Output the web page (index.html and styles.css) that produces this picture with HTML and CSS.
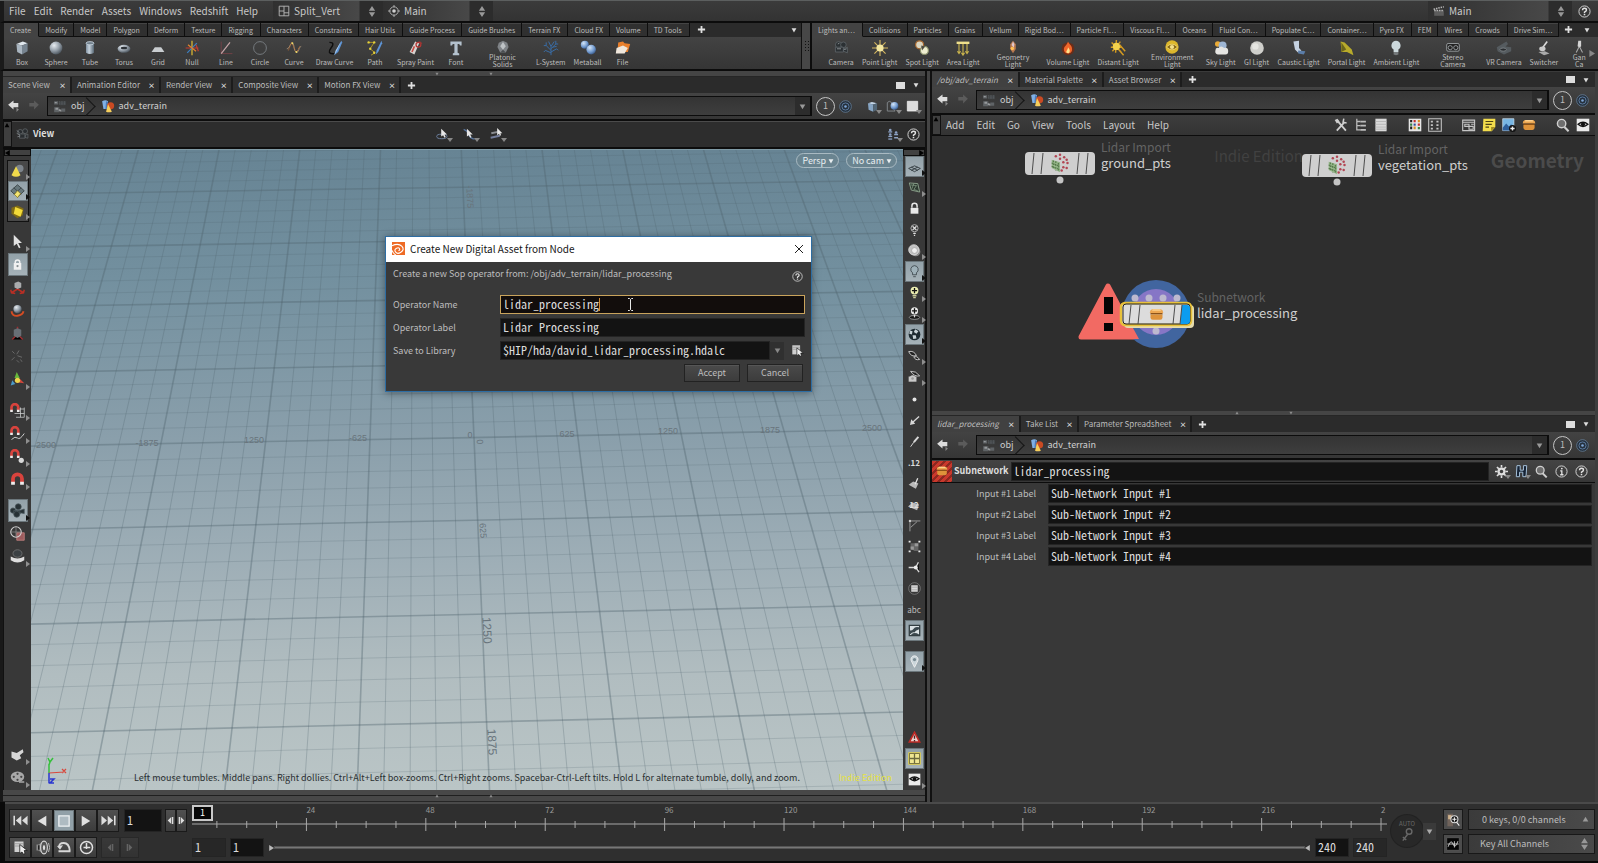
FILE: index.html
```html
<!DOCTYPE html>
<html lang="en">
<head>
<meta charset="utf-8">
<title>adv_terrain</title>
<link rel="stylesheet" href="styles.css">
</head>
<body>
<svg class="defs" aria-hidden="true">
  <defs>
    <radialGradient id="ball" cx=".35" cy=".3" r=".8"><stop offset="0" stop-color="#e8edf2"/><stop offset=".5" stop-color="#97a1ab"/><stop offset="1" stop-color="#3d464e"/></radialGradient>
    <radialGradient id="blueball" cx=".35" cy=".3" r=".8"><stop offset="0" stop-color="#d5e6f8"/><stop offset=".6" stop-color="#6e97cc"/><stop offset="1" stop-color="#2c4a78"/></radialGradient>
    <linearGradient id="tube"><stop offset="0" stop-color="#7f90a0"/><stop offset=".4" stop-color="#c6d2dc"/><stop offset="1" stop-color="#566673"/></linearGradient>
  </defs>
  <symbol id="box" viewBox="0 0 20 20"><path fill="#dfe6ec" d="M3 5l8-3 6 2-7 3z"/><path fill="#a9b5c0" d="M3 5l7 2v11l-6-3z"/><path fill="#76838f" d="M10 7l7-3v10l-7 4z"/></symbol>
  <symbol id="sphere" viewBox="0 0 20 20"><circle cx="10" cy="10" r="8" fill="url(#ball)"/></symbol>
  <symbol id="tubei" viewBox="0 0 20 20"><path fill="url(#tube)" d="M5 4v12q5 3 10 0V4z"/><ellipse cx="10" cy="4" rx="5" ry="2" fill="#71808c" stroke="#c6d2dc"/></symbol>
  <symbol id="torus" viewBox="0 0 20 20"><ellipse cx="10" cy="11" rx="8" ry="5" fill="url(#ball)"/><ellipse cx="10" cy="10" rx="4" ry="1.6" fill="#2c3136"/></symbol>
  <symbol id="gridi" viewBox="0 0 20 20"><path fill="#c9cdd0" d="M6 9h8l4 6H2z"/></symbol>
  <symbol id="null" viewBox="0 0 20 20"><path stroke="#d8b631" stroke-width="1.6" d="M10 1v18"/><path stroke="#c33a31" stroke-width="1.5" d="M2 10h16M15 6l3 8"/><path stroke="#3d7fc0" stroke-width="1.5" d="M4 16L16 4"/><path stroke="#e6842b" stroke-width="1.5" d="M5 6l10 8"/></symbol>
  <symbol id="line" viewBox="0 0 20 20"><path stroke="#7c4147" d="M4 2v15h14" fill="none"/><path stroke="#c7a5a8" stroke-width="1.5" d="M4 17L15 3"/></symbol>
  <symbol id="circle" viewBox="0 0 20 20"><circle cx="10" cy="10" r="8" fill="none" stroke="#767b80" stroke-width="1.2"/></symbol>
  <symbol id="curve" viewBox="0 0 20 20"><path fill="none" stroke="#b89e81" d="M1 11C5 11 5 3 8 4s1 10 5 11 2-6 6-7"/><path stroke="#c9702e" fill="none" stroke-dasharray="1.5 1" d="M3 13L7 3l6 13 4-8"/><g fill="#eadc6a"><circle cx="8" cy="4" r="1.2"/><circle cx="13" cy="15" r="1.2"/></g></symbol>
  <symbol id="draw" viewBox="0 0 20 20"><path fill="none" stroke="#0e0e0e" stroke-width="1.8" d="M3 3c6 0 5 3 2 7s-4 8 5 7"/><path fill="#5d94d6" d="M18 1l1 2-5 12-5 4 2-6z"/><path fill="#b7d3ef" d="M18 1L11 13l-2 6 3-5z"/></symbol>
  <symbol id="path" viewBox="0 0 20 20"><path fill="none" stroke="#b09722" stroke-width="1.2" d="M2 3h7l-5 8 6 5-5 3"/><g fill="#e5d13b"><circle cx="2" cy="3" r="1.5"/><circle cx="9" cy="3" r="1.5"/><circle cx="4" cy="11" r="1.5"/><circle cx="9" cy="16" r="1.5"/></g><path fill="#5d94d6" d="M18 1l1 3-5 11-3 3 1-5z"/></symbol>
  <symbol id="spray" viewBox="0 0 20 20"><path fill="#d7d3d0" d="M9 2l5 2-6 14-6-3z"/><path stroke="#c64a43" stroke-width="2" d="M8 8l-3 7"/><circle cx="13" cy="6" r="3" fill="none" stroke="#b53734" stroke-width="1.6"/><path fill="#9a3633" d="M14 1l4 3-3 2z"/></symbol>
  <symbol id="font" viewBox="0 0 20 20"><path fill="#b4c1cd" d="M3 2h14v5h-2l-1-2h-2v11l2 1v2H6v-2l2-1V5H6L5 7H3z"/></symbol>
  <symbol id="platonic" viewBox="0 0 20 20"><path fill="#7f8387" d="M10 1l6 3 2 6-4 8H6l-4-8 2-6z"/><path fill="#bec2c5" d="M10 3l4 6-4 5-4-5z"/><path fill="#4a4e51" d="M6 18l4-4 4 4z"/></symbol>
  <symbol id="lsys" viewBox="0 0 20 20"><path fill="none" stroke="#3a6ea8" stroke-width="1.2" d="M10 19V8M10 13L4 7M10 11l6-6M10 8L7 2M10 8l4-6M4 7V3M4 7H1M16 5V1M16 5h3M10 15l7-4M10 16l-7-3M17 11l2 2M3 13l-2 2M12 9l5-1"/></symbol>
  <symbol id="meta" viewBox="0 0 20 20"><circle cx="6" cy="6" r="5" fill="url(#blueball)"/><circle cx="14" cy="12" r="6" fill="url(#blueball)"/></symbol>
  <symbol id="file" viewBox="0 0 20 20"><path fill="#e87f2c" d="M4 3l6-1 2 2 7 1-3 10H3z"/><path fill="#efe7dc" d="M2 10l8-3 6 3-4 7H1z"/></symbol>
  <symbol id="cam" viewBox="0 0 20 20"><g fill="#2b3033" stroke="#5f666a"><circle cx="7" cy="6" r="4"/><circle cx="13" cy="6" r="3.5"/><path d="M3 9h10v6H3zM13 11l5-2v7l-5-2z"/></g><path stroke="#9ca2a5" d="M5 11h5M14 12l3-1M6 5l2-1"/></symbol>
  <symbol id="sun" viewBox="0 0 20 20"><path stroke="#d6b85f" stroke-width="1.4" d="M10 0v20M0 10h20M3 3l14 14M17 3L3 17"/><circle cx="10" cy="10" r="4.5" fill="#f3e7a0"/></symbol>
  <symbol id="spot" viewBox="0 0 20 20"><circle cx="7" cy="6" r="5" fill="#d9d4c0" stroke="#a5652b" stroke-width="1.5"/><circle cx="13" cy="13" r="5" fill="#efeed0" stroke="#89906a" stroke-width="1.5"/><path fill="#4d4b40" d="M9 7l5 1-4 5z"/></symbol>
  <symbol id="area" viewBox="0 0 20 20"><path fill="#eedf8c" d="M2 2h16v3H2z"/><path stroke="#c9b34d" stroke-width="1.4" fill="none" d="M5 5v11M10 5v13M15 5v11M3 14l2 3 2-3M8 16l2 3 2-3M13 14l2 3 2-3"/></symbol>
  <symbol id="geol" viewBox="0 0 20 20"><path fill="#b9794f" d="M10 1l4 5v7l-4 6-4-6V6z"/><path fill="#dfc7cf" d="M10 2l2 4-1 5-3-4z"/><circle cx="9" cy="12" r="2.5" fill="#ffbf54"/></symbol>
  <symbol id="fire" viewBox="0 0 20 20"><circle cx="10" cy="11" r="8" fill="#6b2d18"/><path fill="#f0662a" d="M10 2c2 4 6 6 5 11s-9 5-10 0 4-6 5-11z"/><path fill="#ffe28b" d="M10 9c1 2 3 3 2 6s-5 1-4-1 2-3 2-5z"/></symbol>
  <symbol id="distant" viewBox="0 0 20 20"><path stroke="#d59c20" stroke-width="1.8" d="M2 3l12 12M8 0l-1 16M1 9h14M12 6l7 8M10 11l7 8M3 14L13 2"/><circle cx="8" cy="8" r="4.5" fill="#f5d24c"/></symbol>
  <symbol id="env" viewBox="0 0 20 20"><circle cx="10" cy="10" r="9.500" fill="#dcb72c"/><path d="M2 10q8-8 16 0-8 8-16 0z" fill="#8b6b15" stroke="#f8e58a"/><circle cx="10" cy="10" r="3" fill="#f4e28c"/></symbol>
  <symbol id="sky" viewBox="0 0 20 20"><circle cx="6" cy="5" r="3.5" fill="#ebab36"/><circle cx="12" cy="7" r="5" fill="#9eb6d4"/><path fill="#e5e5e2" d="M3 13q0-4 4-3 3-4 7 0 5-1 5 4t-5 4H6q-4-1-3-5z"/></symbol>
  <symbol id="gi" viewBox="0 0 20 20"><circle cx="10" cy="10" r="8.500" fill="#cfcfcb"/><circle cx="8" cy="8" r="4" fill="#e5e5e1"/></symbol>
  <symbol id="caustic" viewBox="0 0 20 20"><path fill="#c5d2e2" d="M3 2l7-1v9l3 3-4 3-4-4z"/><path fill="#5b7da8" d="M9 13l9 1-2 4-7-1z"/></symbol>
  <symbol id="portal" viewBox="0 0 20 20"><path fill="#b8ab2b" d="M2 2l5 1 9 9 2 7-8-4H3z"/><path fill="#6a651c" d="M3 3l6 9-6 3z"/></symbol>
  <symbol id="bulb" viewBox="0 0 20 20"><path fill="#ccd8dc" d="M10 1a6 6 0 0 1 3 11v3H7v-3a6 6 0 0 1 3-11z"/><path fill="#75797b" d="M7 15h6v3l-3 1-3-1z"/></symbol>
  <symbol id="stereo" viewBox="0 0 20 20"><g fill="#222" stroke="#a5a9ab" stroke-width="1.2"><rect x="1" y="5" width="18" height="11" rx="2"/><circle cx="6" cy="11" r="3"/><circle cx="14" cy="11" r="3"/></g></symbol>
  <symbol id="vr" viewBox="0 0 20 20"><path fill="#555b5f" d="M1 9l12-7 2 3-3 3 7 1v5l-9 4-8-4z"/><ellipse cx="9" cy="12" rx="4" ry="2" fill="#2a2d30" stroke="#83898c"/></symbol>
  <symbol id="switcher" viewBox="0 0 20 20"><path fill="none" stroke="#d9d9d9" stroke-width="2" d="M14 2L8 10"/><ellipse cx="8" cy="11" rx="4" ry="3" fill="#c9c9c9"/><path fill="#aaa" d="M3 15l8-1 6 3-7 2z"/></symbol>
  <symbol id="gan" viewBox="0 0 20 20"><path fill="#d4d4d4" d="M9 1h4v8l-2 2-3-2z"/><path stroke="#aaa" stroke-width="1.5" d="M10 10l-4 8M11 10l4 8"/></symbol>

  <symbol id="back" viewBox="0 0 20 20"><path fill="currentColor" d="M1 8l9-7v4h8v7h-8v4z"/><path fill="#888" d="M15 13l4 3-4 4z"/></symbol>
  <symbol id="fwd" viewBox="0 0 20 20"><path fill="#5b5b5b" d="M19 8l-8-7v4H3v6h8v5z"/></symbol>
  <symbol id="obj" viewBox="0 0 20 20"><g fill="#5f6366"><path d="M1 2h6v5H1zM1 11h8v8H1zM12 13h6v5h-6z"/><path d="M9 2h10v6H9z" fill="#43474a"/></g><path fill="#96999b" d="M3 12h4v3H3zM8 14l4 1v3l-4-1zM2 3h3v2H2z"/><path stroke="#6a6e71" d="M8 3h10M8 6h10" stroke-dasharray="2 2"/></symbol>
  <symbol id="geo" viewBox="0 0 20 20"><path fill="#7fb0e6" d="M1 2q5-3 9 0v12H3z"/><path fill="#4d7ab5" d="M7 2l3 1v11H6z"/><circle cx="14" cy="9" r="5.5" fill="#c94a23"/><path fill="#f6ce5c" d="M10 6l6 12q-5 2-9 0z"/></symbol>
  <symbol id="target" viewBox="0 0 20 20"><circle cx="10" cy="10" r="9" fill="#25303c" stroke="#6f8cab"/><circle cx="10" cy="10" r="5.5" fill="none" stroke="#6a8fbb" stroke-width="1.2"/><circle cx="10" cy="10" r="2" fill="#7da5d6"/></symbol>
  <symbol id="help" viewBox="0 0 20 20"><circle cx="10" cy="10" r="8.6" fill="none" stroke="#d5d5d5" stroke-width="1.5"/><path fill="none" stroke="#e3e3e3" stroke-width="2.2" d="M7 8q0-3 3-3t3 2.500q0 1.500-3 3.500v1.500"/><path fill="#e3e3e3" d="M8.800 13.800h2.400v2H8.800z"/></symbol>
  <symbol id="info" viewBox="0 0 20 20"><circle cx="10" cy="10" r="8.600" fill="none" stroke="#d5d5d5" stroke-width="1.500"/><path stroke="#e3e3e3" stroke-width="2" fill="none" d="M8 9h2.500v6M8 15h5"/><circle cx="10.500" cy="5.500" r="1.400" fill="#e3e3e3"/></symbol>
  <symbol id="updown" viewBox="0 0 10 14"><path fill="#989898" d="M5 0l4 6H1zM5 14l4-6H1z"/></symbol>
  <symbol id="down" viewBox="0 0 10 10"><path fill="currentColor" d="M1 2h8L5 9z"/></symbol>
  <symbol id="up" viewBox="0 0 10 10"><path fill="currentColor" d="M1 8h8L5 1z"/></symbol>
  <symbol id="right" viewBox="0 0 10 10"><path fill="currentColor" d="M2 0v10l8-5z"/></symbol>
  <symbol id="left" viewBox="0 0 10 10"><path fill="currentColor" d="M8 0v10L0 5z"/></symbol>
  <symbol id="plus" viewBox="0 0 10 10"><path fill="#e0e0e0" d="M4 1h2v3h3v2H6v3H4V6H1V4h3z"/></symbol>
  <symbol id="split" viewBox="0 0 20 20"><path fill="none" stroke="#b8b8b8" stroke-width="1.500" d="M2 2h16v16H2zM10 2v16M2 10h8M10 13h8"/></symbol>
  <symbol id="radial" viewBox="0 0 20 20"><circle cx="10" cy="10" r="7" fill="none" stroke="#b5b5b5" stroke-width="1.500"/><circle cx="10" cy="10" r="3" fill="#d0d0d0"/><path stroke="#b5b5b5" stroke-width="1.500" d="M10 0v4M10 16v4M0 10h4M16 10h4"/></symbol>
  <symbol id="clap" viewBox="0 0 20 20"><path fill="#5d5d5d" d="M2 9h16v9H2z"/><path stroke="#b7b7b7" stroke-width="2.500" stroke-dasharray="2.500 1.500" d="M1 7l17-4M2 9h16"/></symbol>
  <symbol id="camgray" viewBox="0 0 20 20"><g fill="#292d30" stroke="#666b6f"><circle cx="6" cy="7" r="3.500"/><circle cx="13" cy="6" r="3.500"/><path d="M5 10h8v6H5zM13 12l4-2v6l-4-1z"/></g><path stroke="#8f9498" d="M1 9l5 3M2 14l4-1M1 5l4 3"/></symbol>
  <symbol id="ptr1" viewBox="0 0 20 20"><ellipse cx="9" cy="13" rx="8" ry="3.500" fill="none" stroke="#6d7f9e" stroke-width="1.500"/><path fill="#e6e6e6" d="M8 1v12l3-2 2 4 2-1-2-4h4z"/></symbol>
  <symbol id="ptr2" viewBox="0 0 20 20"><path fill="none" stroke="#58749c" stroke-width="2" d="M1 2q6 2 8 8t9 7"/><path fill="#e6e6e6" d="M6 1v12l3-2 2 4 2-1-2-4h4z"/></symbol>
  <symbol id="ptr3" viewBox="0 0 20 20"><path stroke="#8a8d92" stroke-width="3" d="M2 8l10-2"/><path stroke="#747e9c" stroke-width="3" d="M1 15l14-3"/><path fill="#e6e6e6" d="M11 0v11l3-2 1 3 2-1-1-3h3z"/></symbol>
  <symbol id="layouti" viewBox="0 0 20 20"><g fill="#8ca1c4"><circle cx="5" cy="3" r="2"/><path d="M2 5h6v2H2z"/><circle cx="5" cy="10" r="2"/><path d="M2 12h6v2H2z"/><path d="M2 16h6v2H2z"/><circle cx="14" cy="7" r="2"/><path d="M11 9h6v2h-6zM11 14h6v2h-6z"/></g></symbol>
  <symbol id="prim" viewBox="0 0 20 20"><path fill="none" stroke="#80868a" stroke-width="1.500" d="M2 4l3-2 4 2v6l5 7H2z"/><circle cx="13" cy="9" r="6" fill="url(#blueball)"/></symbol>
  <symbol id="square" viewBox="0 0 20 20"><path fill="#dcdcdc" stroke="#fff" d="M2 2h16v15H2z"/></symbol>
  <symbol id="cube2" viewBox="0 0 20 20"><path fill="#c4d6e8" d="M3 5l6-2 8 2-6 2z"/><path fill="#86a5c4" d="M3 5l8 2v11l-7-3z"/><path fill="#536777" d="M11 7l6-2v10l-6 3z"/></symbol>

  <symbol id="cone" viewBox="0 0 20 20"><circle cx="13" cy="6" r="5" fill="#7d848b"/><path fill="#f0d94b" d="M8 3l6 12q-6 4-12 0z"/></symbol>
  <symbol id="diamond" viewBox="0 0 20 20"><path fill="#67777b" stroke="#30383b" d="M10 1l9 8-9 9-9-9z"/><path stroke="#333b3e" d="M5 5l10 9M15 5L5 14"/><path fill="#f5e573" stroke="#9b8a2b" d="M10 9l4 4-4 5-4-4z"/></symbol>
  <symbol id="gold" viewBox="0 0 20 20"><path fill="#806c15" d="M2 5l8-3 8 4-1 9-7 4-8-6z"/><path fill="#f2da39" d="M7 4l10 4-3 9-9-4z"/></symbol>
  <symbol id="arrow" viewBox="0 0 20 20"><path fill="#e1e1e1" d="M5 1v15l4-3 3 6 2-1-3-6h5z"/></symbol>
  <symbol id="lock" viewBox="0 0 20 20"><path fill="none" stroke="#e8e8e8" stroke-width="2.200" d="M6 9V6a4 4 0 0 1 8 0v3"/><path fill="#e8e8e8" d="M4 9h12v9H4z"/></symbol>
  <symbol id="padlock" viewBox="0 0 20 20"><path fill="none" stroke="#f1f1f1" stroke-width="2" d="M7 9V7a3 3 0 0 1 6 0v2"/><path fill="#f1f1f1" d="M5 8h10v9H5z"/><circle cx="10" cy="12" r="1.500" fill="#868d90"/></symbol>
  <symbol id="move" viewBox="0 0 20 20"><path stroke="#b92f25" stroke-width="2" d="M2 17l8-5 8 5M1 13l1 4 5 1M19 13l-1 4-5 1" fill="none"/><path fill="#a9abad" d="M6 4l5-2 4 2v6l-5 2-4-2z"/></symbol>
  <symbol id="rot" viewBox="0 0 20 20"><path fill="none" stroke="#d44c23" stroke-width="2.500" d="M2 11q1 7 8 6t8-6"/><circle cx="10" cy="8" r="5.500" fill="url(#ball)"/></symbol>
  <symbol id="scale" viewBox="0 0 20 20"><path stroke="#9d2e31" stroke-width="2" d="M3 18l7-7 7 7M10 10V1"/><path fill="#686f76" d="M5 5l5-2 5 2v8l-5 3-5-3z"/></symbol>
  <symbol id="dots" viewBox="0 0 20 20"><path stroke="#6b6b6b" stroke-width="1.300" fill="none" d="M3 3l3 3M12 2l-3 5M6 11l-4 4M10 9l6 2M9 15l3 3M14 14l2 3"/></symbol>
  <symbol id="axes" viewBox="0 0 20 20"><path fill="#67b83b" d="M9 0l4 8H6z"/><path fill="#d2463b" d="M19 15l-8-1 2-5z"/><path fill="#4b9ac8" d="M1 18l2-7 4 5z"/><circle cx="10" cy="11" r="3.500" fill="#eed44e"/></symbol>
  <symbol id="mag" viewBox="0 0 20 20"><path fill="none" stroke="#d8433d" stroke-width="5" d="M4 14V9a6 6 0 0 1 12 0v5"/><path stroke="#ececec" stroke-width="5" d="M4 13v4M16 13v4"/></symbol>
  <symbol id="maggrid" viewBox="0 0 20 20"><path fill="none" stroke="#cfd2d2" d="M9 8h10M6 14h13M8 19h11M14 6v13M19 6v13"/><path fill="none" stroke="#d8433d" stroke-width="3.500" d="M2 10V6a4.500 4.500 0 0 1 9 0v4"/><path stroke="#ececec" stroke-width="3.500" d="M2 9v3M11 9v3"/></symbol>
  <symbol id="magcurve" viewBox="0 0 20 20"><path fill="none" stroke="#d0d0d0" stroke-width="1.300" d="M2 18q5-5 8-2t9-6"/><path fill="none" stroke="#d8433d" stroke-width="3.500" d="M2 10V6a4.500 4.500 0 0 1 9 0v4"/><path stroke="#ececec" stroke-width="3.500" d="M2 9v3M11 9v3"/></symbol>
  <symbol id="magpt" viewBox="0 0 20 20"><circle cx="15" cy="15" r="3.500" fill="#d8d8d8"/><path fill="none" stroke="#d8433d" stroke-width="3.500" d="M2 10V6a4.500 4.500 0 0 1 9 0v4"/><path stroke="#ececec" stroke-width="3.500" d="M2 9v3M11 9v3"/></symbol>
  <symbol id="camdark" viewBox="0 0 20 20"><g fill="#273135" stroke="#4b585e"><circle cx="4" cy="10" r="3.500"/><circle cx="11" cy="5" r="4"/><path d="M5 10h9v4H5z"/><circle cx="9" cy="15" r="4"/><path d="M13 10l6-2v6l-6-1z"/></g></symbol>
  <symbol id="overlap" viewBox="0 0 20 20"><path fill="#9d5c5e" stroke="#c98584" d="M9 9h10v10H9z"/><circle cx="8" cy="8" r="7" fill="none" stroke="#d2d2d2" stroke-width="1.500"/><path stroke="#888" d="M8 1v14M1 8h14"/></symbol>
  <symbol id="disc" viewBox="0 0 20 20"><path fill="#dedede" d="M1 10q9 5 18 0v5q-9 6-18 0z"/><ellipse cx="10" cy="6" rx="6" ry="5" fill="#3b4043" stroke="#777"/></symbol>
  <symbol id="hand" viewBox="0 0 20 20"><path fill="#d5d5d5" d="M2 6l7 2 8-5 1 4-5 4 2 4-6 3-7-4z"/></symbol>
  <symbol id="reel" viewBox="0 0 20 20"><ellipse cx="10" cy="9" rx="9" ry="7" fill="#a8a8a8"/><g fill="#454545"><circle cx="10" cy="5" r="1.500"/><circle cx="5" cy="9" r="1.500"/><circle cx="15" cy="9" r="1.500"/><circle cx="10" cy="13" r="1.500"/></g><path stroke="#a8a8a8" stroke-width="2" d="M12 16h7"/></symbol>

  <symbol id="plane" viewBox="0 0 20 20"><path fill="none" stroke="#232c30" stroke-width="1.200" d="M1 13l9-4 9 4-9 5zM5 11l10 5M15 11L5 16"/></symbol>
  <symbol id="mesh" viewBox="0 0 20 20"><path fill="#2d3a31" stroke="#93ab93" stroke-width="1.300" d="M2 3l13 1 3 13-13-3z"/><path stroke="#93ab93" fill="none" d="M4 6l9 1-4 6 6 2M9 4l-3 8"/></symbol>
  <symbol id="bulbx" viewBox="0 0 20 20"><circle cx="10" cy="8" r="5.500" fill="#333" stroke="#b6b6b6" stroke-width="1.400"/><path stroke="#ddd" stroke-width="2" d="M7 5l6 6M13 5l-6 6M8 16h4M9 19h2"/></symbol>
  <symbol id="shiny" viewBox="0 0 20 20"><circle cx="12" cy="12" r="7" fill="#8c8c8c"/><circle cx="9" cy="9" r="8" fill="#c3c3c3" stroke="#eee"/><circle cx="10" cy="10" r="4.500" fill="#efefef" stroke="#999"/></symbol>
  <symbol id="bulbo" viewBox="0 0 20 20"><path fill="#9fb1b9" stroke="#333d42" stroke-width="1.200" d="M10 1a6 6 0 0 1 3 11v3H7v-3a6 6 0 0 1 3-11zM8 18h4"/></symbol>
  <symbol id="bulbp" viewBox="0 0 20 20"><circle cx="10" cy="7" r="6" fill="#eef0b2"/><path stroke="#111" stroke-width="2" d="M10 3v8M6 7h8"/><path stroke="#c9cb9b" stroke-width="2" d="M7 15h6M8 18h4"/></symbol>
  <symbol id="bulbq" viewBox="0 0 20 20"><ellipse cx="10" cy="16" rx="8" ry="3" fill="#111" stroke="#d0d0d0"/><circle cx="10" cy="6" r="5.500" fill="#ececec"/><path stroke="#111" stroke-width="2" d="M10 2v8M6 6h8"/><path stroke="#ddd" stroke-width="2" d="M10 12v4"/></symbol>
  <symbol id="checker" viewBox="0 0 20 20"><circle cx="10" cy="10" r="9" fill="#1d2b31"/><path fill="#c7d3d7" d="M3 4l4 1-1 5-4-1zM11 2l5 3-3 4-4-3zM7 11h5l1 5-5 1z"/></symbol>
  <symbol id="eyes" viewBox="0 0 20 20"><path fill="#222" stroke="#c4c4c4" stroke-width="1.500" d="M1 4q8-2 12 6-8 3-12-6zM9 12q5-2 9 4-7 2-9-4z"/></symbol>
  <symbol id="eyecam" viewBox="0 0 20 20"><path fill="#222" stroke="#c4c4c4" stroke-width="1.500" d="M4 2q8-1 14 7-8 2-14-7z"/><path fill="#c9c9c9" d="M1 10h12v8H1z"/><circle cx="7" cy="12" r="4" fill="#c9c9c9"/><circle cx="7" cy="13" r="2" fill="#999"/></symbol>
  <symbol id="pt" viewBox="0 0 20 20"><circle cx="10" cy="10" r="3" fill="#e6e6e6"/></symbol>
  <symbol id="ptn" viewBox="0 0 20 20"><path fill="none" stroke="#d8d8d8" stroke-width="2" d="M17 4L6 14"/><path fill="#d8d8d8" d="M3 17l2-9 6 7z"/></symbol>
  <symbol id="pen" viewBox="0 0 20 20"><path stroke="#d8d8d8" stroke-width="3" d="M16 3L9 11"/><path stroke="#d8d8d8" stroke-width="1.500" d="M9 11l-5 7"/></symbol>
  <symbol id="primn" viewBox="0 0 20 20"><path fill="#b9b9b9" d="M1 12l7-5 8 3-4 8z"/><path stroke="#e5e5e5" stroke-width="2" d="M15 2l-4 9"/></symbol>
  <symbol id="wedge" viewBox="0 0 20 20"><path fill="#b9b9b9" d="M0 13l7-6 10 3-3 9z"/></symbol>
  <symbol id="angle" viewBox="0 0 20 20"><path fill="none" stroke="#999" stroke-width="1.500" d="M3 19V3h16M4 13L14 4"/><circle cx="3" cy="3" r="1.800" fill="#ccc"/></symbol>
  <symbol id="hull" viewBox="0 0 20 20"><path fill="#666" d="M4 5h6v5h6v7h-6l-6-4z"/><path fill="#999" d="M10 5h6v5h-6zM4 10h5v5H4z"/><g fill="#ececec"><path d="M1 1h3v3H1zM16 1h3v3h-3zM1 16h3v3H1zM16 16h3v3h-3z"/></g></symbol>
  <symbol id="tri" viewBox="0 0 20 20"><path stroke="#dadada" stroke-width="2" d="M16 2l-4 8 5 7M12 10H1"/><circle cx="12" cy="10" r="3" fill="#eee"/></symbol>
  <symbol id="list" viewBox="0 0 20 20"><circle cx="10" cy="10" r="9" fill="none" stroke="#8c8c8c"/><path fill="#dadada" d="M5 5h10v10H5z"/><path stroke="#999" d="M5 8h10M5 12h10"/></symbol>
  <symbol id="picture" viewBox="0 0 20 20"><path fill="#dae1e4" stroke="#323d41" stroke-width="2" d="M2 2h16v16H2z"/><path fill="#3a474d" d="M3 10q4 0 5-2 3-5 9-3v3q-6 2-7 5-3-1-7 3zM5 16q5-4 12 0v1H5z"/></symbol>
  <symbol id="pin" viewBox="0 0 20 20"><path fill="#cad5da" stroke="#f3f3f3" stroke-width="1.300" d="M10 19L5 9a5.500 5.500 0 1 1 10 0z"/><circle cx="10" cy="7" r="2.500" fill="#788a92"/></symbol>
  <symbol id="warn" viewBox="0 0 20 20"><path fill="#ead2ce" stroke="#bd2a25" stroke-width="2.500" d="M10 2l8 15H2z"/><path stroke="#4c2020" stroke-width="2" d="M10 7v5M10 14v2"/></symbol>
  <symbol id="four" viewBox="0 0 20 20"><path fill="#6b683d" stroke="#e0d257" stroke-width="1.500" d="M1 1h18v18H1z"/><path fill="#f0e792" d="M3 3h6v6H3zM11 3h6v6h-6zM3 11h6v6H3zM11 11h6v6h-6z"/></symbol>
  <symbol id="eye" viewBox="0 0 20 20"><path fill="#eaeaea" d="M1 1h18v18H1z"/><path fill="none" stroke="#111" stroke-width="2" d="M3 9q7-6 14 0-7 6-14 0z"/><circle cx="10" cy="9" r="3" fill="#111"/></symbol>

  <symbol id="wrench" viewBox="0 0 20 20"><path stroke="#cfcfcf" stroke-width="2.600" fill="none" d="M5 4l12 14M15 6L4 18"/><path stroke="#cfcfcf" stroke-width="2.200" fill="none" d="M14 1l-1 5 5 1"/><path fill="#cfcfcf" d="M1 3l4-2 3 4-4 3z"/></symbol>
  <symbol id="tree" viewBox="0 0 20 20"><path fill="none" stroke="#bdbdbd" stroke-width="1.800" d="M4 1v17M4 5h5M4 11h5M4 17h5"/><path stroke="#bdbdbd" stroke-width="2.500" d="M9 5h8M9 11h8M9 17h8"/></symbol>
  <symbol id="rows" viewBox="0 0 20 20"><path fill="#d9d9d9" d="M2 1h16v18H2z"/><path stroke="#aaa" d="M2 5h16M2 9h16M2 13h16M2 16h16"/></symbol>
  <symbol id="palette" viewBox="0 0 20 20"><path fill="#e6e6e6" d="M1 1h18v18H1z"/><g fill="#222"><path d="M3 3h3v3H3zM3 12h3v4H3z"/></g><path fill="#c73030" d="M8 3h3v3H8zM14 8h3v3h-3z"/><path fill="#d58e22" d="M14 3h3v3h-3zM8 12h3v4H8z"/><path fill="#368143" d="M3 8h3v3H3zM14 13h3v3h-3z"/><path fill="#2d4d9b" d="M8 8h3v3H8z"/></symbol>
  <symbol id="tilegrid" viewBox="0 0 20 20"><path fill="none" stroke="#c4c4c4" stroke-width="1.500" d="M1 1h18v18H1z"/><path stroke="#c4c4c4" stroke-width="2.500" stroke-dasharray="3 2" d="M4 5h5M4 10h5M4 15h5M12 5h5M12 10h5M12 15h5"/></symbol>
  <symbol id="boxes" viewBox="0 0 20 20"><path fill="none" stroke="#c5c5c5" stroke-width="1.600" d="M1 18V3h17v15zM1 6h17M4 9h6v3H4zM10 12h6v4h-6zM13 9h4"/></symbol>
  <symbol id="note" viewBox="0 0 20 20"><path fill="#f2dc4c" d="M2 1h17v12l-5 6H1z"/><path stroke="#4c4315" stroke-width="1.700" d="M5 5h11M5 9h9M5 13h5"/><path fill="#a08b1e" d="M13 13h6l-6 6z"/></symbol>
  <symbol id="img" viewBox="0 0 20 20"><path fill="#78b6e3" stroke="#cbdfee" d="M1 1h16v17H1z"/><path fill="#2e5f9a" d="M1 14l5-6 4 4 3-3 4 5v4H1z"/><circle cx="15" cy="15" r="5" fill="#111"/><path stroke="#eee" stroke-width="2" d="M15 12v6M12 15h6"/></symbol>
  <symbol id="chest" viewBox="0 0 20 20"><path fill="#eda751" d="M4 3h12q3 1 3 5H1q0-4 3-5z"/><path fill="#fbd08d" d="M5 3h10l1 2H4z"/><path fill="#8c5217" d="M2 8h16v2H2z"/><path fill="#de933a" d="M2 10h16v4q0 3-3 3H5q-3 0-3-3z"/></symbol>
  <symbol id="search" viewBox="0 0 20 20"><circle cx="8" cy="8" r="6" fill="#6e6e6e" stroke="#d0d0d0" stroke-width="2"/><path stroke="#d0d0d0" stroke-width="3" d="M12 13l6 6"/></symbol>
  <symbol id="gear" viewBox="0 0 20 20"><circle cx="10" cy="10" r="4.500" fill="none" stroke="#ddd" stroke-width="3.500"/><path stroke="#ddd" stroke-width="2.500" d="M10 0v4M10 16v4M0 10h4M16 10h4M3 3l3 3M14 14l3 3M17 3l-3 3M6 14l-3 3"/></symbol>
  <symbol id="hicon" viewBox="0 0 20 20"><path fill="#152234" stroke="#a9c3dc" stroke-width="1.500" d="M3 1h5v7h5V1h5l-1 17h-5v-7H7v7H2z"/></symbol>
  <symbol id="pts" viewBox="0 0 24 24"><path fill="#94b588" d="M2 8l10 3v12L2 18z"/><path stroke="#527547" stroke-width="1.300" stroke-dasharray="2 1.500" d="M4 9v9M7 10v11M10 12v10M2 12l10 4M2 16l10 4"/><g fill="#b24553"><circle cx="7" cy="4" r="1.500"/><circle cx="12" cy="2" r="1.500"/><circle cx="12" cy="7" r="1.500"/><circle cx="17" cy="5" r="1.500"/><circle cx="16" cy="11" r="1.500"/><circle cx="21" cy="12" r="1.500"/><circle cx="16" cy="17" r="1.500"/><circle cx="20" cy="8" r="1.500"/><circle cx="20" cy="18" r="1.500"/><circle cx="14" cy="21" r="1.500"/></g></symbol>

  <symbol id="pfirst" viewBox="0 0 20 14"><path fill="#dcdcdc" d="M1 1h2v12H1zM11 1v12L4 7zM19 1v12l-7-6z"/></symbol>
  <symbol id="plast" viewBox="0 0 20 14"><path fill="#dcdcdc" d="M17 1h2v12h-2zM1 1v12l7-6zM9 1v12l7-6z"/></symbol>
  <symbol id="prev" viewBox="0 0 14 14"><path fill="#e0e0e0" d="M12 1v12L2 7z"/></symbol>
  <symbol id="next" viewBox="0 0 14 14"><path fill="#e0e0e0" d="M2 1v12l10-6z"/></symbol>
  <symbol id="stop" viewBox="0 0 14 14"><path fill="#aebbc2" stroke="#eef2f4" stroke-width="1.500" d="M1 1h12v12H1z"/></symbol>
  <symbol id="stepb" viewBox="0 0 10 10"><path fill="#ddd" d="M6 0v10L1 5zM7 0h2v10H7z"/></symbol>
  <symbol id="stepf" viewBox="0 0 10 10"><path fill="#ddd" d="M4 0v10l5-5zM1 0h2v10H1z"/></symbol>
  <symbol id="pick" viewBox="0 0 20 20"><path fill="#d0d0d0" d="M2 2h12v14H2z"/><path stroke="#8d8d8d" d="M2 5h12M2 8h12"/><path fill="#eee" stroke="#151515" d="M9 6v12l3-2 2 3 2-1-1-4h4z"/></symbol>
  <symbol id="sound" viewBox="0 0 20 20"><path fill="#8d8d8d" d="M2 6h3l5-4v16l-5-4H2z"/><path fill="#222" d="M4 7h2v6H4z"/><ellipse cx="12" cy="10" rx="4.500" ry="8.500" fill="#555" stroke="#d8d8d8" stroke-width="1.500"/><ellipse cx="12" cy="10" rx="1.500" ry="3.500" fill="#ddd"/><path fill="none" stroke="#bbb" stroke-width="1.300" d="M18 4q3 6 0 12"/></symbol>
  <symbol id="loop" viewBox="0 0 20 20"><path fill="none" stroke="#d8d8d8" stroke-width="2.500" d="M2 15h16M17 14Q16 4 9 4T3 10"/><path fill="#d8d8d8" d="M0 8l8-1-4 6z"/></symbol>
  <symbol id="clock" viewBox="0 0 20 20"><circle cx="10" cy="10" r="8" fill="#444" stroke="#e2e2e2" stroke-width="2"/><path stroke="#e2e2e2" stroke-width="2" d="M10 4v8M6 10h9"/></symbol>
  <symbol id="keyadd" viewBox="0 0 20 20"><path fill="#70635b" d="M2 1h8v18H2z"/><path fill="#cfb28c" d="M3 3h5v6H3z"/><circle cx="12" cy="9" r="5" fill="#161616" stroke="#ddd" stroke-width="1.500"/><path stroke="#eee" stroke-width="1.500" d="M9 9h6M12 6v6M15 13l4 5"/></symbol>
  <symbol id="wave" viewBox="0 0 20 20"><path fill="#050505" stroke="#666" d="M1 1h18v18H1z"/><path fill="none" stroke="#ddd" stroke-width="1.200" d="M2 10h16M3 14Q7 2 10 10t7-4M12 6v9"/></symbol>
</svg>

<header class="menubar">
  <nav class="menus"><button>File</button><button>Edit</button><button>Render</button><button>Assets</button><button>Windows</button><button>Redshift</button><button>Help</button></nav>
  <label class="pick desk"><svg><use href="#split"/></svg><select aria-label="Desktop"><option>Split_Vert</option></select><svg class="ud"><use href="#updown"/></svg></label>
  <label class="pick desk"><svg><use href="#radial"/></svg><select aria-label="Radial menu"><option>Main</option></select><svg class="ud"><use href="#updown"/></svg></label>
  <label class="pick take"><svg><use href="#clap"/></svg><select aria-label="Take"><option>Main</option></select><svg class="ud"><use href="#updown"/></svg></label>
  <button class="ic" aria-label="Help"><svg><use href="#help"/></svg></button>
</header>

<section class="shelves">
  <div class="shelf first">
    <div class="stabs"><button class="on">Create</button><button>Modify</button><button>Model</button><button>Polygon</button><button>Deform</button><button>Texture</button><button>Rigging</button><button>Characters</button><button>Constraints</button><button>Hair Utils</button><button>Guide Process</button><button>Guide Brushes</button><button>Terrain FX</button><button>Cloud FX</button><button>Volume</button><button>TD Tools</button><button class="add" aria-label="Add shelf"><svg><use href="#plus"/></svg></button><button class="more" aria-label="Shelf menu"><svg><use href="#down"/></svg></button></div>
    <div class="tools">
      <button><svg><use href="#box"/></svg><span>Box</span></button><button><svg><use href="#sphere"/></svg><span>Sphere</span></button><button><svg><use href="#tubei"/></svg><span>Tube</span></button><button><svg><use href="#torus"/></svg><span>Torus</span></button><button><svg><use href="#gridi"/></svg><span>Grid</span></button><button><svg><use href="#null"/></svg><span>Null</span></button><button><svg><use href="#line"/></svg><span>Line</span></button><button><svg><use href="#circle"/></svg><span>Circle</span></button><button><svg><use href="#curve"/></svg><span>Curve</span></button><button class="long"><svg><use href="#draw"/></svg><span>Draw Curve</span></button><button><svg><use href="#path"/></svg><span>Path</span></button><button class="long"><svg><use href="#spray"/></svg><span>Spray Paint</span></button><button><svg><use href="#font"/></svg><span>Font</span></button><button class="two"><svg><use href="#platonic"/></svg><span>Platonic<br>Solids</span></button><button><svg><use href="#lsys"/></svg><span>L-System</span></button><button><svg><use href="#meta"/></svg><span>Metaball</span></button><button><svg><use href="#file"/></svg><span>File</span></button>
    </div>
  </div>
  <div class="shelfgrip"><i></i></div>
  <div class="shelf second">
    <div class="stabs"><button class="on">Lights an…</button><button>Collisions</button><button>Particles</button><button>Grains</button><button>Vellum</button><button>Rigid Bod…</button><button>Particle Fl…</button><button>Viscous Fl…</button><button>Oceans</button><button>Fluid Con…</button><button>Populate C…</button><button>Container…</button><button>Pyro FX</button><button>FEM</button><button>Wires</button><button>Crowds</button><button>Drive Sim…</button><button class="add" aria-label="Add shelf"><svg><use href="#plus"/></svg></button><button class="more" aria-label="Shelf menu"><svg><use href="#down"/></svg></button></div>
    <div class="tools">
      <button><svg><use href="#cam"/></svg><span>Camera</span></button><button><svg><use href="#sun"/></svg><span>Point Light</span></button><button><svg><use href="#spot"/></svg><span>Spot Light</span></button><button><svg><use href="#area"/></svg><span>Area Light</span></button><button class="two"><svg><use href="#geol"/></svg><span>Geometry<br>Light</span></button><button><svg><use href="#fire"/></svg><span>Volume Light</span></button><button><svg><use href="#distant"/></svg><span>Distant Light</span></button><button class="two"><svg><use href="#env"/></svg><span>Environment<br>Light</span></button><button><svg><use href="#sky"/></svg><span>Sky Light</span></button><button><svg><use href="#gi"/></svg><span>GI Light</span></button><button><svg><use href="#caustic"/></svg><span>Caustic Light</span></button><button><svg><use href="#portal"/></svg><span>Portal Light</span></button><button><svg><use href="#bulb"/></svg><span>Ambient Light</span></button><button class="two"><svg><use href="#stereo"/></svg><span>Stereo<br>Camera</span></button><button><svg><use href="#vr"/></svg><span>VR Camera</span></button><button><svg><use href="#switcher"/></svg><span>Switcher</span></button><button class="last"><svg><use href="#gan"/></svg><span>Gan<br>Ca</span></button>
      <svg class="scroll"><use href="#right"/></svg>
    </div>
  </div>
</section>

<main class="desk-area">
  <section class="pane scene">
    <div class="hsplit"><svg><use href="#down"/></svg><i></i><svg><use href="#down"/></svg></div>
    <div class="ptabs"><button class="on">Scene View<b>×</b></button><button>Animation Editor<b>×</b></button><button>Render View<b>×</b></button><button>Composite View<b>×</b></button><button>Motion FX View<b>×</b></button><button class="add" aria-label="New tab"><svg><use href="#plus"/></svg></button><span class="wnd"><i></i><svg><use href="#down"/></svg></span></div>
    <div class="pathbar">
      <button class="nav" aria-label="Back"><svg><use href="#back"/></svg></button><button class="nav" aria-label="Forward"><svg><use href="#fwd"/></svg></button>
      <div class="crumbs"><button><svg><use href="#obj"/></svg>obj</button><i class="chev"></i><button><svg><use href="#geo"/></svg>adv_terrain</button><span class="dd"><svg><use href="#down"/></svg></span></div>
      <button class="one">1</button><button class="ic" aria-label="Follow"><svg><use href="#target"/></svg></button>
      <span class="extra"><button class="ic fly" aria-label="Shading"><svg><use href="#cube2"/></svg></button><button class="ic fly" aria-label="Display"><svg><use href="#prim"/></svg></button><button class="ic fly" aria-label="Background"><svg><use href="#square"/></svg></button></span>
    </div>
    <div class="viewbar">
      <span class="grip"><svg><use href="#up"/></svg></span>
      <button class="viewbtn"><svg><use href="#camgray"/></svg>View</button>
      <span class="mid"><button class="ic fly" aria-label="Tumble"><svg><use href="#ptr1"/></svg></button><button class="ic fly" aria-label="Track"><svg><use href="#ptr2"/></svg></button><button class="ic fly" aria-label="Dolly"><svg><use href="#ptr3"/></svg></button></span>
      <button class="ic fly" aria-label="Layout"><svg><use href="#layouti"/></svg></button><button class="ic" aria-label="Help"><svg><use href="#help"/></svg></button>
    </div>
    <div class="stage">
      <div class="col lcol">
        <span class="collapse"><svg><use href="#left"/></svg></span>
        <div class="grp"><button class="m" aria-label="Objects"><svg><use href="#cone"/></svg></button><button class="lit m" aria-label="Geometry"><svg><use href="#diamond"/></svg></button><button class="m" aria-label="Dynamics"><svg><use href="#gold"/></svg></button></div>
        <div class="tset"><button class="m" aria-label="Select"><svg><use href="#arrow"/></svg></button><button class="lit" aria-label="Lock"><svg><use href="#padlock"/></svg></button><button aria-label="Move"><svg><use href="#move"/></svg></button><button aria-label="Rotate"><svg><use href="#rot"/></svg></button><button aria-label="Scale"><svg><use href="#scale"/></svg></button><button aria-label="Pose"><svg><use href="#dots"/></svg></button><button class="m" aria-label="Handles"><svg><use href="#axes"/></svg></button></div>
        <div class="tset"><button class="m" aria-label="Grid snap"><svg><use href="#maggrid"/></svg></button><button class="m" aria-label="Curve snap"><svg><use href="#magcurve"/></svg></button><button class="m" aria-label="Point snap"><svg><use href="#magpt"/></svg></button><button class="m" aria-label="Multi snap"><svg><use href="#mag"/></svg></button></div>
        <div class="tset"><button class="lit m" aria-label="View tool"><svg><use href="#camdark"/></svg></button><button aria-label="Region"><svg><use href="#overlap"/></svg></button><button class="m" aria-label="Render"><svg><use href="#disc"/></svg></button></div>
        <div class="tset end"><button class="m" aria-label="Inspect"><svg><use href="#hand"/></svg></button><button class="m" aria-label="Flipbook"><svg><use href="#reel"/></svg></button></div>
      </div>
      <div class="viewport">
        <svg id="ground" viewBox="31 148 872 642" preserveAspectRatio="none" aria-hidden="true"></svg>
        <div class="cams"><button>Persp<svg><use href="#down"/></svg></button><button>No cam<svg><use href="#down"/></svg></button></div>
        <svg class="gnomon" viewBox="0 0 26 30"><path stroke="#36c03c" stroke-width="1.500" fill="none" d="M5 17V8M4 2l2 4 3-4M6 6L5 9"/><path stroke="#d8483c" stroke-width="1.200" fill="none" d="M5 17l15-1M18 13l4 4M22 13l-4 4"/><path stroke="#2a36d0" stroke-width="1.500" fill="none" d="M5 17v10M6 23h4l-4 4h4"/></svg>
        <p class="hint">Left mouse tumbles. Middle pans. Right dollies. Ctrl+Alt+Left box-zooms. Ctrl+Right zooms. Spacebar-Ctrl-Left tilts. Hold L for alternate tumble, dolly, and zoom.</p>
        <p class="edition">Indie Edition</p>
      </div>
      <div class="col rcol">
        <span class="collapse"><svg><use href="#right"/></svg></span>
        <button class="lit m" aria-label="Plane"><svg><use href="#plane"/></svg></button><button class="m" aria-label="Mesh"><svg><use href="#mesh"/></svg></button><button aria-label="Lock view"><svg><use href="#lock"/></svg></button><button aria-label="No lights"><svg><use href="#bulbx"/></svg></button><button class="m" aria-label="Material"><svg><use href="#shiny"/></svg></button><button class="lit m" aria-label="Lighting"><svg><use href="#bulbo"/></svg></button><button class="m" aria-label="Add light"><svg><use href="#bulbp"/></svg></button><button class="m" aria-label="Shadows"><svg><use href="#bulbq"/></svg></button><button class="lit m" aria-label="Textures"><svg><use href="#checker"/></svg></button><button class="m" aria-label="Visibility"><svg><use href="#eyes"/></svg></button><button class="m" aria-label="Camera visibility"><svg><use href="#eyecam"/></svg></button><button class="gapped" aria-label="Points"><svg><use href="#pt"/></svg></button><button aria-label="Normals"><svg><use href="#ptn"/></svg></button><button aria-label="Trails"><svg><use href="#pen"/></svg></button><button class="num">.12</button><button aria-label="Prim normals"><svg><use href="#primn"/></svg></button><button class="num prim"><svg><use href="#wedge"/></svg><span>12</span></button><button aria-label="Profile"><svg><use href="#angle"/></svg></button><button aria-label="Hulls"><svg><use href="#hull"/></svg></button><button aria-label="Vertices"><svg><use href="#tri"/></svg></button><button aria-label="List"><svg><use href="#list"/></svg></button><button class="abc">abc</button><button class="lit" aria-label="Image"><svg><use href="#picture"/></svg></button>
        <button class="lit m pin" aria-label="Pin"><svg><use href="#pin"/></svg></button>
        <span class="end"><button aria-label="Warnings"><svg><use href="#warn"/></svg></button><button class="lit" aria-label="Quad view"><svg><use href="#four"/></svg></button><button class="m" aria-label="Display options"><svg><use href="#eye"/></svg></button></span>
      </div>
    </div>
    <div class="hsplit double"><svg><use href="#up"/></svg><i></i><svg><use href="#up"/></svg></div>
  </section>

  <div class="vsplit"></div>

  <section class="rightside">
    <div class="pane net">
      <div class="ptabs"><button class="on"><em>/obj/adv_terrain</em><b>×</b></button><button>Material Palette<b>×</b></button><button>Asset Browser<b>×</b></button><button class="add" aria-label="New tab"><svg><use href="#plus"/></svg></button><span class="wnd"><i></i><svg><use href="#down"/></svg></span></div>
      <div class="pathbar">
        <button class="nav" aria-label="Back"><svg><use href="#back"/></svg></button><button class="nav" aria-label="Forward"><svg><use href="#fwd"/></svg></button>
        <div class="crumbs"><button><svg><use href="#obj"/></svg>obj</button><i class="chev"></i><button><svg><use href="#geo"/></svg>adv_terrain</button><span class="dd"><svg><use href="#down"/></svg></span></div>
        <button class="one">1</button><button class="ic" aria-label="Follow"><svg><use href="#target"/></svg></button>
      </div>
      <div class="netbar">
        <span class="grip"><svg><use href="#up"/></svg></span>
        <nav class="menus"><button>Add</button><button>Edit</button><button>Go</button><button>View</button><button>Tools</button><button>Layout</button><button>Help</button></nav>
        <span class="icons"><span><button class="ic" aria-label="Tools"><svg><use href="#wrench"/></svg></button><button class="ic" aria-label="Tree"><svg><use href="#tree"/></svg></button><button class="ic" aria-label="List"><svg><use href="#rows"/></svg></button></span><span><button class="ic" aria-label="Colors"><svg><use href="#palette"/></svg></button><button class="ic" aria-label="Shapes"><svg><use href="#tilegrid"/></svg></button></span><span><button class="ic" aria-label="Network box"><svg><use href="#boxes"/></svg></button><button class="ic" aria-label="Sticky note"><svg><use href="#note"/></svg></button><button class="ic" aria-label="Image"><svg><use href="#img"/></svg></button><button class="ic" aria-label="Subnet"><svg><use href="#chest"/></svg></button></span><span><button class="ic" aria-label="Find"><svg><use href="#search"/></svg></button><button class="ic" aria-label="Display options"><svg><use href="#eye"/></svg></button></span></span>
      </div>
      <div class="canvas">
        <p class="mark">Indie Edition</p><p class="context">Geometry</p>
        <div class="node" style="left:93px;top:15px"><svg width="70" height="36" viewBox="0 0 70 36"><rect width="70" height="23" y="1" rx="4" fill="#cfcfcf"/><path stroke="#4d4d4d" d="M9 2L7 23M18 2l-2 21M54 2l-2 21M63 2l-2 21"/><svg x="25" y="2" width="20" height="20"><use href="#pts"/></svg><circle cx="35" cy="29" r="3.500" fill="#c4c4c4"/></svg><p><small>Lidar Import</small>ground_pts</p></div>
        <div class="node" style="left:370px;top:17px"><svg width="70" height="36" viewBox="0 0 70 36"><rect width="70" height="23" y="1" rx="4" fill="#cfcfcf"/><path stroke="#4d4d4d" d="M9 2L7 23M18 2l-2 21M54 2l-2 21M63 2l-2 21"/><svg x="25" y="2" width="20" height="20"><use href="#pts"/></svg><circle cx="35" cy="29" r="3.500" fill="#c4c4c4"/></svg><p><small>Lidar Import</small>vegetation_pts</p></div>
        <div class="node sub" style="left:145px;top:142px"><svg width="118" height="72" viewBox="0 0 118 72">
          <path fill="#f26a63" stroke="#f26a63" stroke-width="5" stroke-linejoin="round" d="M31 8l27 51H4z"/>
          <circle cx="79" cy="36" r="34" fill="#41659f"/><circle cx="79" cy="34" r="23" fill="#8676c6"/>
          <path fill="#f26a63" d="M45 30l17 31H40z"/>
          <path fill="#050505" d="M27 19h9v17h-9zM27 45h9v8h-9z"/>
          <g fill="#bdb9cf"><circle cx="58" cy="20" r="3.500"/><circle cx="72" cy="20" r="3.500"/><circle cx="86" cy="20" r="3.500"/><circle cx="100" cy="20" r="3.500"/><circle cx="79" cy="53" r="3.500"/></g>
          <rect x="47" y="27" width="70" height="23" rx="4" fill="#e6dcae"/><rect x="44" y="25" width="70" height="22" rx="4" fill="#dcdcdc" stroke="#e8c23a" stroke-width="2.500"/><rect x="46" y="26" width="67" height="20" rx="3" fill="none" stroke="#222"/>
          <path fill="#0b9cf0" d="M105 27h5q3 0 3 3v13q0 3-3 3h-7z"/><path stroke="#4d4d4d" d="M54 27l-2 19M63 27l-2 19M98 27l-2 19M105 27l-2 19"/>
          <svg x="71" y="29" width="17" height="15"><use href="#chest"/></svg></svg><p><small>Subnetwork</small>lidar_processing</p></div>
      </div>
    </div>
    <div class="hsplit thin"><svg><use href="#up"/></svg><i></i><svg><use href="#down"/></svg></div>
    <div class="pane params">
      <div class="ptabs"><button class="on"><em>lidar_processing</em><b>×</b></button><button>Take List<b>×</b></button><button>Parameter Spreadsheet<b>×</b></button><button class="add" aria-label="New tab"><svg><use href="#plus"/></svg></button><span class="wnd"><i></i><svg><use href="#down"/></svg></span></div>
      <div class="pathbar">
        <button class="nav" aria-label="Back"><svg><use href="#back"/></svg></button><button class="nav" aria-label="Forward"><svg><use href="#fwd"/></svg></button>
        <div class="crumbs"><button><svg><use href="#obj"/></svg>obj</button><i class="chev"></i><button><svg><use href="#geo"/></svg>adv_terrain</button><span class="dd"><svg><use href="#down"/></svg></span></div>
        <button class="one">1</button><button class="ic" aria-label="Follow"><svg><use href="#target"/></svg></button>
      </div>
      <div class="ophead"><button class="opicon" aria-label="Operator"><svg><use href="#chest"/></svg></button><label for="opname">Subnetwork</label><input id="opname" value="lidar_processing"><button class="ic fly" aria-label="Settings"><svg><use href="#gear"/></svg></button><button class="ic fly" aria-label="Houdini"><svg><use href="#hicon"/></svg></button><button class="ic" aria-label="Find"><svg><use href="#search"/></svg></button><button class="ic" aria-label="Info"><svg><use href="#info"/></svg></button><button class="ic" aria-label="Help"><svg><use href="#help"/></svg></button></div>
      <div class="fields">
        <label for="i1">Input #1 Label</label><input id="i1" value="Sub-Network Input #1">
        <label for="i2">Input #2 Label</label><input id="i2" value="Sub-Network Input #2">
        <label for="i3">Input #3 Label</label><input id="i3" value="Sub-Network Input #3">
        <label for="i4">Input #4 Label</label><input id="i4" value="Sub-Network Input #4">
      </div>
    </div>
  </section>
</main>

<footer class="playbar">
  <div class="transport">
    <div class="row"><button aria-label="First frame"><svg class="w"><use href="#pfirst"/></svg></button><button aria-label="Play back"><svg><use href="#prev"/></svg></button><button class="lit" aria-label="Stop"><svg><use href="#stop"/></svg></button><button aria-label="Play"><svg><use href="#next"/></svg></button><button aria-label="Last frame"><svg class="w"><use href="#plast"/></svg></button><input class="frame" aria-label="Current frame" value="1"><button class="mini" aria-label="Step back"><svg><use href="#stepb"/></svg></button><button class="mini" aria-label="Step forward"><svg><use href="#stepf"/></svg></button></div>
    <div class="row low"><button aria-label="Pick"><svg><use href="#pick"/></svg></button><button aria-label="Audio"><svg><use href="#sound"/></svg></button><button aria-label="Loop"><svg><use href="#loop"/></svg></button><button aria-label="Real time"><svg><use href="#clock"/></svg></button><span class="off"><button disabled aria-label="Previous key"><svg><use href="#stepb"/></svg></button><button disabled aria-label="Next key"><svg><use href="#stepf"/></svg></button></span></div>
  </div>
  <div class="time">
    <div class="ruler"><svg id="ruler" aria-hidden="true"></svg><span class="playhead">1</span></div>
    <div class="range"><input class="gs" aria-label="Global start" value="1"><input aria-label="Range start" value="1"><span class="track"><svg><use href="#right"/></svg><i></i><svg><use href="#left"/></svg></span><input aria-label="Range end" value="240"><input class="gs" aria-label="Global end" value="240"></div>
  </div>
  <div class="autokey"><button class="auto">AUTO<svg viewBox="0 0 20 20"><circle cx="13" cy="5" r="4" fill="none" stroke="#686868" stroke-width="2"/><path stroke="#686868" stroke-width="2" d="M11 9L4 18M6 15l3 2M4 13l3 2"/></svg></button><button class="autodd" aria-label="Auto key options"><svg><use href="#down"/></svg></button></div>
  <div class="keys">
    <button class="kicon" aria-label="Scoped channels"><svg><use href="#keyadd"/></svg></button><button class="chan">0 keys, 0/0 channels<svg><use href="#up"/></svg></button>
    <button class="kicon" aria-label="Channel graph"><svg><use href="#wave"/></svg></button><label class="chan"><select aria-label="Key mode"><option>Key All Channels</option></select><svg class="ud"><use href="#updown"/></svg></label>
  </div>
</footer>

<form class="dialog" role="dialog" aria-label="Create New Digital Asset from Node">
  <div class="title"><svg viewBox="0 0 14 14"><path fill="#ee6b25" d="M0 0h14v14H0z"/><path fill="none" stroke="#fff" stroke-width="1.200" d="M0 4Q7 1 10.500 4.500t-1 6.500q-3.500 2.500-5.500 0t.500-4 3.500 0-1 2.500M0 9q1 3 4 5"/></svg><span>Create New Digital Asset from Node</span><button type="button" aria-label="Close"><svg viewBox="0 0 10 10"><path stroke="#222" d="M1 1l8 8M9 1L1 9"/></svg></button></div>
  <div class="dbody">
    <div class="desc"><p>Create a new Sop operator from: /obj/adv_terrain/lidar_processing</p><button type="button" class="ic" aria-label="Help"><svg><use href="#help"/></svg></button></div>
    <div class="drow"><label for="oname">Operator Name</label><span class="focus"><input id="oname" value="lidar_processing"><i class="caret"></i><svg class="ibeam" viewBox="0 0 7 13"><path fill="none" stroke="#e8e8e8" d="M1 .5h1.500l1 1 1-1H6M3.500 1.500v10M1 12.500h1.500l1-1 1 1H6"/></svg></span></div>
    <div class="drow"><label for="olabel">Operator Label</label><input id="olabel" value="Lidar Processing"></div>
    <div class="drow"><label for="olib">Save to Library</label><input id="olib" value="$HIP/hda/david_lidar_processing.hdalc"><button type="button" class="libdd" aria-label="Library list"><svg><use href="#down"/></svg></button><button type="button" class="ic file" aria-label="Choose file"><svg><use href="#pick"/></svg></button></div>
    <div class="acts"><button type="button">Accept</button><button type="button">Cancel</button></div>
  </div>
</form>
<script src="scene.js"></script>
</body>
</html>
```
FILE: styles.css
```css
:root {
  --ui: "Noto Sans CJK SC", "Noto Sans", sans-serif;
  --mono: "Noto Sans Mono CJK SC", "DejaVu Sans Mono", monospace;
  --text: #bdbdbd;
  --line: #0c0c0c;
}
* { box-sizing: border-box; }
body { margin: 0; height: 100vh; min-height: 600px; overflow: hidden; display: flex; flex-direction: column; background: #2d2d2d; color: var(--text); font: 9px/12px var(--ui); border-top: 1px solid #5c5f5f; position: relative; }
button, input, select { font: inherit; color: inherit; margin: 0; padding: 0; border: 0; background: none; border-radius: 0; }
button { display: flex; align-items: center; justify-content: center; white-space: nowrap; flex: none; }
select { appearance: none; flex: 1; min-width: 0; }
svg { display: block; flex: none; overflow: visible; }
p { margin: 0; }
em { font-style: italic; }
.defs { position: absolute; width: 0; height: 0; }

.menubar { display: flex; align-items: center; height: 22px; flex: none; background: linear-gradient(#3b3b3b, #333); border-bottom: 2px solid var(--line); border-left: 4px solid #1a1a1a; padding-right: 6px; }
.menus { display: flex; gap: 8px; padding-left: 5px; font-size: 10px; color: #c8c8c8; }
.pick { display: flex; align-items: center; height: 20px; gap: 4px; padding-left: 5px; font-size: 10px; color: #c8c8c8; }
.pick > svg { width: 12px; height: 12px; }
.pick .ud { width: 22px; height: 11px; }
.desk { width: 110px; background: linear-gradient(90deg, #303030 0, #484848 86px, #2c2c2c 87px); }
.menus + .desk { margin-left: 15px; }
.take { width: 144px; margin-left: auto; margin-right: 4px; background: linear-gradient(90deg, #303030 0, #484848 120px, #2c2c2c 121px); }
.ic { width: 16px; height: 16px; position: relative; }
.ic svg { width: 13px; height: 13px; }
.ud { height: 11px; width: 10px; }

.shelves { display: flex; height: 48px; flex: none; background: #2b2b2b; border-bottom: 2px solid var(--line); border-left: 4px solid #1a1a1a; }
.shelf { min-width: 0; display: flex; flex-direction: column; font-size: 7px; line-height: 8px; overflow: hidden; }
.first { flex: 798; }
.second { flex: 787; border-left: 2px solid var(--line); }
.shelfgrip { width: 9px; background: #474747; border: solid #111; border-width: 0 0 0 1px; display: flex; align-items: center; justify-content: center; }
.shelfgrip i { width: 5px; height: 13px; background: radial-gradient(#111 40%, transparent 45%) 0 0 / 3px 3px; }
.stabs { display: flex; height: 14px; background: #2b2b2b; }
.stabs button { padding: 0 6px; border: 1px solid #0e0e0e; border-width: 0 1px 1px 0; box-shadow: inset 0 1px #444; background: #303030; }
.stabs .on { background: #434343; border-bottom-color: #434343; }
.stabs button:nth-child(3n + 1) { padding-right: 7px; }
.stabs .add, .stabs .more { background: none; box-shadow: none; border-color: transparent; padding: 0 7px; color: #ddd; }
.stabs .add svg { width: 9px; height: 9px; }
.stabs .more { margin-left: auto; padding: 0 3px; }
.second .stabs .add { padding: 0 5px; }
.stabs .more svg { width: 6px; height: 6px; }
.tools { flex: 1; display: flex; background: linear-gradient(#434343, #353535); position: relative; padding-left: 1px; }
.tools button { flex-direction: column; justify-content: flex-start; min-width: 34px; padding: 3px 4px 0; gap: 2px; }
.tools button svg { width: 16px; height: 16px; }
.tools .long { min-width: 47px; }
.tools .two { width: 59px; }
.tools .two, .tools .last { gap: 0; line-height: 7px; }
.tools .two svg, .tools .last svg { height: 14px; }
.second .tools { padding-left: 12px; }
.scroll { position: absolute; right: 3px; top: 13px; width: 7px; height: 7px; color: #888; }

.desk-area { flex: 1; display: flex; min-height: 0; border-left: 3px solid #191919; background: #2c2c2c; }
.scene { flex: 922; min-width: 0; }
.rightside { flex: 663; min-width: 0; display: flex; flex-direction: column; border-right: 3px solid #3d3d3d; box-shadow: inset -1px 0 #111; }
.vsplit { width: 7px; background: #444; border: solid #111; border-width: 0 2px; }
.pane { display: flex; flex-direction: column; min-height: 0; background: #2d2d2d; }
.hsplit { height: 6px; flex: none; background: #454545; border-bottom: 1px solid #262626; display: flex; align-items: center; justify-content: center; gap: 16px; color: #8c8c8c; }
.hsplit svg { width: 4px; height: 4px; }
.hsplit i { width: 18px; height: 5px; background: radial-gradient(#8a8a8a 30%, transparent 45%) 0 0 / 2px 2px; }
.hsplit.double { height: 12px; background: linear-gradient(#484848 0 5px, #202020 5px 6px, #484848 6px); }
.hsplit.double i { height: 10px; }
.thin { height: 5px; }
.ptabs { display: flex; height: 16px; flex: none; font-size: 8px; background: #2b2b2b; }
.ptabs button { padding: 0 3px 0 5px; gap: 7px; border-right: 2px solid #1c1c1c; background: #303030; }
.ptabs .on { background: #414141; gap: 8px; }
.ptabs b { width: 9px; text-align: center; color: #ddd; font-size: 7px; }
.ptabs .add { background: none; border: 0; padding: 0 6px; }
.ptabs .add svg { width: 9px; height: 9px; }
.wnd { display: flex; align-items: center; gap: 8px; margin-left: auto; padding-right: 6px; color: #ddd; }
.wnd i { width: 9px; height: 7px; background: #ddd; }
.wnd svg { width: 6px; height: 6px; }
.pathbar { display: flex; align-items: center; height: 28px; flex: none; background: linear-gradient(#434343, #363636); border-bottom: 2px solid var(--line); padding: 0 5px 0 0; }
.nav { width: 20px; height: 16px; color: #ddd; }
.nav svg { width: 13px; height: 12px; }
.crumbs { flex: 1; display: flex; align-items: center; height: 20px; margin: 0 4px; border: 1px solid var(--line); border-right-width: 2px; background: linear-gradient(#343434, #3e3e3e); color: #cfcfcf; }
.crumbs button { gap: 4px; padding-left: 5px; }
.crumbs svg { width: 14px; height: 13px; }
.chev { width: 13px; height: 13px; border: solid #151515; border-width: 1px 1px 0 0; transform: rotate(45deg); margin: 0 3px 0 -5px; }
.dd { margin-left: auto; width: 15px; height: 18px; background: #2c2c2c; color: #999; display: flex; align-items: center; justify-content: center; }
.crumbs .dd svg { width: 7px; height: 7px; }
.one { width: 19px; height: 19px; border: 1px solid #c4c4c4; border-radius: 50%; margin-right: 2px; }
.extra { display: flex; gap: 4px; margin-left: 11px; }
.fly::after, .m::after { content: ""; position: absolute; right: -2px; bottom: 0; border: 3px solid transparent; border-top: 4px solid #888; border-bottom: 0; }
.viewbar { display: flex; align-items: center; gap: 4px; height: 28px; flex: none; background: #2d2d2d; border-bottom: 2px solid var(--line); box-shadow: inset 0 1px #4b4b4b; padding-right: 4px; }
.grip { align-self: stretch; width: 9px; background: #3f3f3f; border: 1px solid #111; color: #000; }
.grip svg { width: 6px; height: 7px; }
.viewbtn { font-weight: 700; color: #ddd; gap: 3px; }
.viewbtn svg { width: 14px; height: 14px; }
.mid { margin: 0 auto; display: flex; gap: 11px; }
.stage { flex: 1; display: flex; min-height: 0; }
.col { display: flex; flex-direction: column; align-items: center; background: #383838; flex: none; }
.lcol { width: 28px; border-left: 1px solid #111; padding-bottom: 1px; }
.rcol { width: 22px; }
.collapse { align-self: stretch; height: 7px; flex: none; background: #414141; border: 1px solid #0d0d0d; color: #000; }
.collapse svg { width: 6px; height: 6px; }
.rcol .collapse svg { margin-left: auto; }
.col button { width: 20px; position: relative; }
.lcol button { height: 23px; }
.lcol button svg { width: 15px; height: 15px; }
.rcol button { height: 21px; width: 19px; }
.rcol button svg { width: 13px; height: 13px; }
.lit { background: linear-gradient(#91a0a8, #a7b3b9); box-shadow: inset 0 0 0 1px #6c777c; }
.m::after { border: 3px solid transparent; border-left: 4px solid #8f8f8f; border-right: 0; bottom: 1px; }
.lit.m::after { border-left-color: #111; }
.grp { margin-top: 4px; border: 1px solid #111; background: #484848; }
.lcol .grp button { height: 20px; }
.tset { margin-top: 8px; }
.col .end { margin-top: auto; }
.num { font: 700 8px/10px var(--ui); color: #ddd; }
.prim svg, .prim span { grid-area: 1 / 1; }
.rcol .prim { display: grid; place-items: center; }
.abc { font-size: 8px; }
.rcol .gapped { margin-top: 2px; }
.rcol .pin { margin-top: 10px; }
.viewport { flex: 1; position: relative; min-width: 0; background: linear-gradient(#678494, #73909f 20%, #8a9fab 45%, #9fafb7 65%, #b1bdc0 82%, #bac5c6); border-top: 1px solid #7f9aa5; overflow: hidden; }
#ground { position: absolute; inset: 0; width: 100%; height: 100%; }
#ground line { stroke: #50646e; stroke-width: 1; opacity: .2; }
#ground .column { opacity: .28; }
#ground .major { opacity: .38; stroke-width: 1.600; }
#ground text { font: 9px "Liberation Sans", sans-serif; fill: #68747c; text-anchor: middle; }
#ground .near { font-size: 12px; }
.cams { position: absolute; top: 3px; right: 6px; display: flex; gap: 7px; color: #e8eef0; }
.cams button { height: 15px; border: 1px solid #a9bac2; border-radius: 8px; padding: 0 4px 0 5px; gap: 2px; background: #6a8490; }
.cams svg { width: 6px; height: 6px; }
.gnomon { position: absolute; left: 13px; bottom: 4px; width: 26px; height: 30px; }
.hint { position: absolute; bottom: 6px; left: 0; right: 0; text-align: center; color: #2a2f31; }
.edition { position: absolute; bottom: 6px; right: 11px; color: #e6e241; }

.net { flex: 340; border-top: 1px solid #3a3a3a; }
.params { flex: 387; background: #383838; }
.net .ptabs { height: 15px; }
.netbar { display: flex; align-items: center; height: 21px; flex: none; background: linear-gradient(#3d3d3d, #333); border-bottom: 1px solid var(--line); padding-right: 4px; }
.netbar .menus { gap: 12px; padding-left: 5px; }
.icons { display: flex; gap: 18px; margin-left: auto; }
.icons > span { display: flex; gap: 4px; }
.icons .ic svg { width: 14px; height: 14px; }
.canvas { flex: 1; position: relative; overflow: hidden; background: #2e2e2e; }
.mark { position: absolute; right: 292px; top: 9px; font-size: 15px; line-height: 22px; color: #414141; }
.context { position: absolute; right: 11px; top: 12px; font-size: 19px; line-height: 24px; font-weight: 700; color: #4b4b4b; }
.node { position: absolute; display: flex; gap: 6px; font-size: 13px; line-height: 15px; color: #cfcfcf; }
.node p { margin-top: -12px; }
.node small { display: block; font-size: 12px; line-height: 16px; color: #636363; }
.node.sub { gap: 2px; }
.node.sub p { margin-top: 11px; }
.ophead { display: flex; align-items: center; gap: 4px; height: 23px; flex: none; background: linear-gradient(#444, #373737); border-bottom: 1px solid var(--line); padding-right: 6px; }
.ophead label { font-weight: 700; color: #ddd; margin-left: -2px; }
.opicon { width: 20px; height: 21px; background: repeating-linear-gradient(135deg, #c9382c 0 3px, #8c2820 3px 5px); }
.opicon svg { width: 12px; height: 12px; }
input { font: 12px/15px var(--mono); min-width: 0; outline: 0; color: #dcdcdc; background: #131313; height: 19px; padding: 0 2px 2px; border: 1px solid #242424; }
.ophead input { flex: 1; margin-left: -2px; }
.fields { display: grid; grid-template-columns: 104px 1fr; gap: 2px 12px; align-items: center; padding: 1px 3px 0 0; text-align: right; }

.playbar { display: flex; height: 61px; flex: none; background: #2f2f2f; border: solid #0a0a0a; border-width: 0 0 2px 5px; box-shadow: inset 0 2px #4a4a4a; padding: 7px 3px 4px 4px; }
.row { display: flex; height: 23px; }
.row button { width: 22px; background: linear-gradient(#505050, #3c3c3c); border: 1px solid #1a1a1a; }
.row .lit { background: #91a0a8; }
.row svg { width: 12px; height: 12px; }
.row svg.w { width: 17px; height: 11px; }
.row .frame { width: 38px; height: 23px; margin: 0 3px 0 5px; }
.row .mini { width: 11px; }
.row .mini svg { width: 7px; height: 7px; }
.low { margin-top: 5px; height: 21px; }
.low svg { width: 15px; height: 15px; }
.off { display: flex; margin-left: 4px; opacity: .3; }
.off button { width: 19px; }
.off svg { width: 7px; height: 7px; }
.time { flex: 1; min-width: 0; margin-left: 5px; display: flex; flex-direction: column; }
.ruler { height: 30px; position: relative; }
#ruler { width: 100%; height: 30px; margin-top: -5px; }
#ruler line { stroke: #a8a8a8; }
#ruler text { font-size: 8px; fill: #999; }
.playhead { position: absolute; left: 0; top: -4px; width: 21px; height: 16px; background: #070707; border: 2px solid #c9c9c9; color: #fff; text-align: center; }
.range { display: flex; align-items: center; gap: 4px; margin-top: 3px; }
.range input { width: 34px; }
.range .gs { background: #272727; }
.track { flex: 1; display: flex; align-items: center; color: #b9b9b9; }
.track i { flex: 1; height: 3px; background: #777; border: 1px solid #555; }
.track svg { width: 6px; height: 12px; }
.autokey { display: flex; align-items: center; width: 49px; margin: 0 3px 4px 4px; }
.auto { width: 32px; height: 32px; border-radius: 50%; background: #282828; box-shadow: 0 0 0 1px #222; flex-direction: column; font-size: 6px; line-height: 8px; color: #686868; }
.auto svg { width: 14px; height: 14px; }
.autodd { width: 13px; height: 17px; background: #3a3a3a; color: #aaa; }
.autodd svg { width: 7px; height: 7px; }
.keys { display: grid; grid-template-columns: 20px 127px; grid-template-rows: 21px 20px; gap: 4px 5px; }
.kicon { background: #4c4c4c; border: 1px solid #191919; }
.kicon svg { width: 14px; height: 14px; }
.chan { display: flex; align-items: center; padding: 0 5px 0 11px; background: linear-gradient(90deg, #3b3b3b, #4a4a4a); border: 1px solid #181818; }
.chan svg { width: 7px; height: 7px; margin-left: auto; color: #999; }
.chan .ud { width: 9px; height: 12px; }
button.chan { padding-left: 13px; }

.dialog { position: absolute; left: 385px; top: 235px; width: 427px; border: 1px solid #2d6da3; background: #393939; box-shadow: 0 1px 8px #0006; }
.title { height: 25px; background: #fff; color: #171717; display: flex; align-items: center; gap: 5px; padding: 0 7px 2px 6px; font: 10px/14px var(--ui); }
.title svg { width: 13px; height: 13px; }
.title button { margin-left: auto; }
.title button svg { width: 10px; height: 10px; }
.dbody { padding: 5px 6px 9px 7px; display: flex; flex-direction: column; }
.desc { display: flex; justify-content: space-between; align-items: flex-start; height: 28px; }
.desc .ic { margin-top: 1px; }
.desc .ic svg { width: 11px; height: 11px; }
.desc p { line-height: 14px; }
.drow { display: flex; height: 19px; margin-bottom: 4px; align-items: center; }
.drow label { width: 107px; }
.drow > input, .focus { flex: 1; }
.focus { display: flex; position: relative; }
.focus input { width: 100%; border-color: #c9a35c; background: #120d0c; }
.caret { position: absolute; left: 99px; top: 3px; width: 1px; height: 13px; background: #d08a35; }
.ibeam { position: absolute; left: 127px; top: 3px; width: 7px; height: 13px; }
.libdd { width: 14px; height: 18px; background: #303030; color: #888; }
.libdd svg { width: 7px; height: 7px; }
.drow .file { margin-left: 5px; }
.acts { display: flex; justify-content: flex-end; gap: 7px; padding-right: 2px; }
.acts button { width: 56px; height: 18px; background: linear-gradient(#4a4a4a, #3c3c3c); border: 1px solid #222; box-shadow: inset 0 1px #565656; }
```
FILE: scene.js
```javascript
const NS = "http://www.w3.org/2000/svg";

function add(parent, tag, attrs, text) {
  const el = document.createElementNS(NS, tag);
  for (const key in attrs) el.setAttribute(key, attrs[key]);
  if (text !== undefined) el.textContent = text;
  parent.appendChild(el);
}

/* Ground plane: columns converge above the view, rows tilt slightly. */
const ground = document.getElementById("ground");
const vanishX = 417, vanishY = -857;
const columnX = (n, y) => {
  const base = 474 + n * 104;
  return base + (base - vanishX) / (437 - vanishY) * (y - 437);
};
const rowY = (n, x) => {
  const depth = 1 / (0.000768 - 0.0000463 * n);
  return vanishY + depth - depth * 0.000015 * (x - 31);
};
for (let i = -40; i <= 40; i++) {
  const n = i / 5;
  add(ground, "line", { x1: columnX(n, 140), y1: 140, x2: columnX(n, 800), y2: 800, class: i % 5 ? "column" : "major" });
}
for (let i = -25; i <= 19; i++) {
  const n = i / 5;
  add(ground, "line", { x1: 20, y1: rowY(n, 20), x2: 910, y2: rowY(n, 910), class: i % 5 ? "" : "major" });
}
[["2500", 46, 447], ["-1875", 147, 445], ["1250", 254, 442], ["-625", 358, 440], ["0", 470, 437],
 ["625", 567, 436], ["1250", 668, 433], ["1875", 770, 432], ["2500", 872, 430]]
  .forEach(([t, x, y]) => add(ground, "text", { x, y }, t));
add(ground, "text", { transform: "translate(467 195) rotate(87)" }, "-1875");
[["0", 477, 441, ""], ["625", 480, 530, ""], ["1250", 483, 630, "near"], ["1875", 488, 742, "near"]]
  .forEach(([t, x, y, c]) => add(ground, "text", { transform: `translate(${x} ${y}) rotate(87)`, class: c }, t));

/* Frame ruler: frames 1 to 241. */
const ruler = document.getElementById("ruler");
add(ruler, "line", { x1: 0, x2: "100%", y1: 20, y2: 20 });
for (let f = 6; f <= 240; f += 6) {
  const x = (f - 1) / 240.2 * 100 + "%";
  const major = f % 24 === 0;
  add(ruler, "line", { x1: x, x2: x, y1: major ? 14 : 17, y2: major ? 27 : 24 });
  if (major) add(ruler, "text", { x, y: 9 }, f === 240 ? "2" : f);
}
```
